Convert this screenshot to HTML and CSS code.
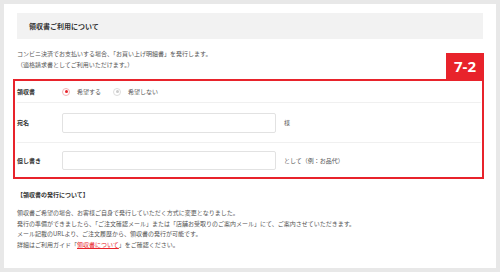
FILE: index.html
```html
<!DOCTYPE html>
<html lang="ja">
<head>
  <meta charset="utf-8">
  <title>領収書ご利用について</title>
  <link rel="stylesheet" href="styles.css">
</head>
<body>
  <div class="card">
    <div class="heading">領収書ご利用について</div>
    <p class="intro">
      コンビニ決済でお支払いする場合、「お買い上げ明細書」を発行します。<br>
      （適格請求書としてご利用いただけます。）
    </p>

    <div class="receipt-box">
      <span class="badge">7-2</span>
      <div class="row row-radio">
        <div class="label">領収書</div>
        <div class="field">
          <span class="radio checked"></span><span class="radio-text">希望する</span>
          <span class="radio"></span><span class="radio-text">希望しない</span>
        </div>
      </div>
      <div class="row row-input">
        <div class="label">宛名</div>
        <div class="field">
          <span class="text-input"></span><span class="suffix">様</span>
        </div>
      </div>
      <div class="row row-last">
        <div class="label">但し書き</div>
        <div class="field">
          <span class="text-input"></span><span class="suffix">として（例：お品代）</span>
        </div>
      </div>
    </div>

    <h4 class="note-title">【領収書の発行について】</h4>
    <p class="note">
      領収書ご希望の場合、お客様ご自身で発行していただく方式に変更となりました。<br>
      発行の準備ができましたら、「ご注文確認メール」または「店舗お受取りのご案内メール」にて、ご案内させていただきます。<br>
      メール記載のURLより、ご注文履歴から、領収書の発行が可能です。<br>
      詳細はご利用ガイド「<a class="link" href="#">領収書について</a>」をご確認ください。
    </p>
  </div>
</body>
</html>
```

FILE: styles.css
```css
body {
    margin: 0;
    padding: 4px;
    background: #e8e8e8;
    font-family: "Noto Sans CJK JP", "Noto Sans", sans-serif;
    color: #555;
}
.card {
    box-sizing: border-box;
    width: 492px;
    height: 264px;
    background: #fff;
    padding: 9px 13px 0 13px;
}
.heading {
    height: 26px;
    line-height: 26px;
    background: #f2f2f2;
    padding-left: 12px;
    font-size: 7px;
    font-weight: bold;
    color: #333;
}
.intro {
    margin: 9px 0 0 0;
    font-size: 6px;
    line-height: 11px;
}
.receipt-box {
    position: relative;
    margin: 9px -1px 0 -4px;
    border: 2px solid #e8232b;
    padding: 0 0 0 2px;
    height: 96px;
}
.badge {
    position: absolute;
    top: -28px;
    right: -2px;
    width: 38px;
    height: 26px;
    line-height: 26px;
    text-align: center;
    background: #e8232b;
    color: #fff;
    font-size: 15px;
    font-weight: bold;
    font-family: "Open Sans", "Noto Sans", sans-serif;
}
.row {
    display: flex;
    align-items: center;
    border-bottom: 1px solid #f0f0f0;
    margin-right: 1px;
}
.row-radio {
    height: 21px;
}
.row-input {
    height: 39px;
}
.row-last {
    height: 34px;
    border-bottom: none;
}
.label {
    width: 45px;
    font-size: 6px;
    font-weight: bold;
    color: #333;
}
.field {
    display: flex;
    align-items: center;
    font-size: 6px;
}
.radio {
    box-sizing: border-box;
    width: 8px;
    height: 8px;
    border-radius: 50%;
    border: 1px solid #ddd;
    display: flex;
    align-items: center;
    justify-content: center;
}
.radio::after {
    content: "";
    width: 3px;
    height: 3px;
    border-radius: 50%;
    background: #ccc;
}
.radio.checked {
    border-color: #f3b5b8;
}
.radio.checked::after {
    background: #e8232b;
}
.radio-text {
    margin: 0 12px 0 7px;
}
.text-input {
    box-sizing: border-box;
    width: 214px;
    height: 20px;
    border: 1px solid #e2e2e2;
    border-radius: 2px;
}
.row-last .text-input {
    height: 19px;
    margin-top: 1px;
}
.suffix {
    margin-left: 8px;
}
.note-title {
    margin: 11px 0 0 0;
    font-size: 6px;
    font-weight: bold;
    color: #333;
    line-height: 10px;
}
.note {
    margin: 8px 0 0 0;
    font-size: 6px;
    line-height: 10.6px;
}
.link {
    color: #e8232b;
    text-decoration: underline;
}
```
